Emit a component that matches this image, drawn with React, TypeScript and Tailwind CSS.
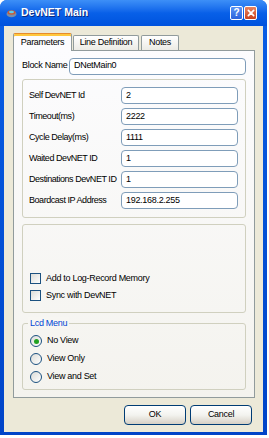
import React from "react";

const font = { fontFamily: '"Liberation Sans", Arial, sans-serif' };

function Field({ label, value }: { label: string; value: string }) {
  return (
    <div className="flex h-[21px] items-center">
      <span className="w-[92px] shrink-0 whitespace-nowrap text-[9px] tracking-[-0.45px] text-black">{label}</span>
      <div className="flex h-[17px] w-[117px] items-center rounded-[4px] border border-[#7f9db9] bg-white px-[4px] text-[9px] tracking-[-0.3px] text-black">
        {value}
      </div>
    </div>
  );
}

function Check({ label }: { label: string }) {
  return (
    <div className="flex h-[17px] items-center gap-[5px]">
      <div className="h-[11px] w-[11px] border border-[#1c5180] bg-gradient-to-br from-[#dcdcd7] to-white" />
      <span className="text-[9px] tracking-[-0.3px] text-black">{label}</span>
    </div>
  );
}

function Radio({ label, on }: { label: string; on?: boolean }) {
  return (
    <div className="flex h-[18px] items-center gap-[5px]">
      <div className="flex h-[12px] w-[12px] items-center justify-center rounded-full border border-[#1c5180] bg-gradient-to-br from-[#dcdcd7] to-white">
        {on && <div className="h-[5px] w-[5px] rounded-full bg-[#21a121]" />}
      </div>
      <span className="text-[9px] tracking-[-0.3px] text-black">{label}</span>
    </div>
  );
}

function XpButton({ label }: { label: string }) {
  return (
    <div className="flex h-[20px] w-[62px] items-center justify-center rounded-[4px] border border-[#003c74] bg-gradient-to-b from-white via-[#f3f3ef] to-[#d6d0c5] text-[9px] tracking-[-0.3px] text-black">
      {label}
    </div>
  );
}

export default function App() {
  return (
    <div className="h-[438px] w-[269px] bg-white" style={font}>
      <div className="flex h-[435px] w-[267px] flex-col rounded-t-[7px] bg-gradient-to-b from-[#0a5fe6] to-[#0044c8]">
        {/* title bar */}
        <div className="flex h-[26px] shrink-0 items-center rounded-t-[7px] bg-gradient-to-b from-[#3d8ff7] via-[#0860e8] to-[#0052dd] pl-[6px] pr-[10px]">
          <svg width="11" height="9" viewBox="0 0 11 9" className="mr-[4px]">
            <ellipse cx="5.5" cy="5" rx="5" ry="3.2" fill="#7a8fa8" />
            <ellipse cx="5.5" cy="3.5" rx="4" ry="2.2" fill="#c75a3a" />
            <ellipse cx="5.5" cy="3" rx="2.5" ry="1.2" fill="#5fd0e8" />
          </svg>
          <span className="text-[10.5px] font-bold text-white [text-shadow:1px_1px_0_#0a2a80]">DevNET Main</span>
          <div className="ml-auto flex gap-[1px]">
            <div className="flex h-[14px] w-[13px] items-center justify-center rounded-[2px] border border-white bg-gradient-to-b from-[#5a93f5] to-[#2a62dc] text-[10px] font-bold leading-none text-white">
              ?
            </div>
            <div className="flex h-[14px] w-[13px] items-center justify-center rounded-[2px] border border-white bg-gradient-to-b from-[#e8845f] to-[#c6401c]">
              <svg width="8" height="8" viewBox="0 0 9 9">
                <path d="M1.5 1.5 L7.5 7.5 M7.5 1.5 L1.5 7.5" stroke="white" strokeWidth="1.8" strokeLinecap="round" />
              </svg>
            </div>
          </div>
        </div>
        {/* body */}
        <div className="mx-[4px] mb-[3px] flex flex-1 flex-col bg-[#ece9d8] px-[9px] pt-[7px]">
          {/* tabs */}
          <div className="flex h-[17px] items-end">
            <div className="relative z-10 -mb-px flex h-[18px] w-[59px] items-center justify-center rounded-t-[2px] border border-b-0 border-[#919b9c] border-t-[#e68b2c] bg-[#fcfcfe] text-[9px] tracking-[-0.3px] text-black shadow-[inset_0_2px_0_#ffc73c]">
              Parameters
            </div>
            <div className="ml-px flex h-[15px] w-[66px] items-center justify-center rounded-t-[2px] border border-b-0 border-[#919b9c] bg-gradient-to-b from-white to-[#ecebe5] text-[9px] tracking-[-0.3px] text-black">
              Line Definition
            </div>
            <div className="ml-[2px] flex h-[15px] w-[38px] items-center justify-center rounded-t-[2px] border border-b-0 border-[#919b9c] bg-gradient-to-b from-white to-[#ecebe5] text-[9px] tracking-[-0.3px] text-black">
              Notes
            </div>
          </div>
          {/* tab panel */}
          <div className="flex h-[348px] w-[242px] flex-col border border-[#919b9c] bg-gradient-to-b from-[#fcfcfe] to-[#f4f3ee] px-[8px] pt-[6px]">
            <div className="flex h-[18px] items-center">
              <span className="w-[47px] shrink-0 whitespace-nowrap text-[9px] tracking-[-0.3px] text-black">Block Name</span>
              <div className="flex h-[17px] w-[177px] items-center rounded-[4px] border border-[#7f9db9] bg-white px-[4px] text-[9px] tracking-[-0.3px] text-black">
                DNetMain0
              </div>
            </div>
            <div className="mt-[4px] flex h-[139px] flex-col rounded-[3px] border border-[#d0d0bf] pl-[6px] pt-[5px]">
              <Field label="Self DevNET Id" value="2" />
              <Field label="Timeout(ms)" value="2222" />
              <Field label="Cycle Delay(ms)" value="1111" />
              <Field label="Waited DevNET ID" value="1" />
              <Field label="Destinations DevNET ID" value="1" />
              <Field label="Boardcast IP Address" value="192.168.2.255" />
            </div>
            <div className="mt-[6px] flex h-[89px] flex-col justify-end rounded-[3px] border border-[#d0d0bf] pb-[8px] pl-[7px]">
              <Check label="Add to Log-Record Memory" />
              <Check label="Sync with DevNET" />
            </div>
            <div className="relative mt-[10px] flex h-[67px] flex-col rounded-[3px] border border-[#d0d0bf] pl-[7px] pt-[8px]">
              <span className="absolute -top-[7px] left-[5px] bg-[#f7f6f2] px-[2px] text-[9px] leading-[12px] tracking-[-0.3px] text-[#0046d5]">
                Lcd Menu
              </span>
              <Radio label="No View" on />
              <Radio label="View Only" />
              <Radio label="View and Set" />
            </div>
          </div>
          <div className="mt-[7px] flex justify-end gap-[4px] pr-[2px]">
            <XpButton label="OK" />
            <XpButton label="Cancel" />
          </div>
        </div>
      </div>
    </div>
  );
}
